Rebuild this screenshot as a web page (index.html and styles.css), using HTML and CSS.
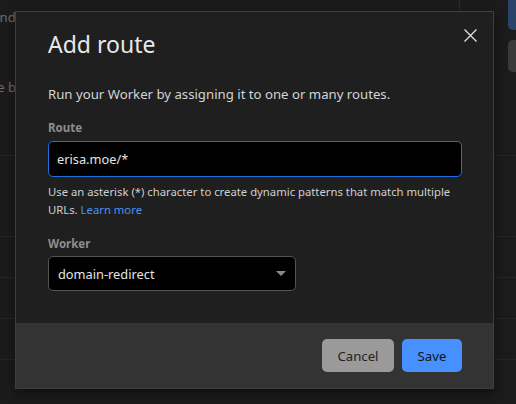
FILE: index.html
```html
<!DOCTYPE html>
<html lang="en">
<head>
<meta charset="utf-8">
<title>Add route</title>
<link rel="stylesheet" href="styles.css">
</head>
<body>
<div class="page">
  <div class="bg" aria-hidden="true">
    <div class="bg-top">
      <div class="bg-copy">
        <p class="bg-text bg-text-1">Add routes and custom domains to run this Worker on your zone</p>
        <p class="bg-text bg-text-2">Routes will be bound to this zone and its subdomains</p>
      </div>
      <div class="bg-divider"></div>
      <div class="bg-actions">
        <span class="bg-btn bg-btn-primary"></span>
        <span class="bg-btn bg-btn-secondary"></span>
      </div>
    </div>
    <div class="bg-table">
      <div class="bg-line bg-line-tall"></div>
      <div class="bg-line"></div>
      <div class="bg-line"></div>
      <div class="bg-line"></div>
      <div class="bg-line"></div>
    </div>
  </div>

  <div class="modal" role="dialog" aria-labelledby="modal-title">
    <div class="modal-body">
      <div class="modal-head">
        <h2 class="modal-title" id="modal-title">Add route</h2>
        <button class="close" aria-label="Close">
          <svg width="13" height="13" viewBox="0 0 13 13"><path d="M0.5 0.5 L12.5 12.5 M12.5 0.5 L0.5 12.5" stroke="#e2e2e2" stroke-width="1.3" fill="none"/></svg>
        </button>
      </div>
      <p class="modal-desc">Run your Worker by assigning it to one or many routes.</p>

      <div class="field">
        <label class="field-label">Route</label>
        <div class="input input-focus">erisa.moe/*</div>
        <p class="field-help">Use an asterisk (*) character to create dynamic patterns that match multiple URLs. <a class="link" href="#">Learn more</a></p>
      </div>

      <div class="field field-worker">
        <label class="field-label">Worker</label>
        <div class="select">
          <span>domain-redirect</span>
          <svg class="caret" width="10" height="5" viewBox="0 0 10 5"><path d="M0 0 H10 L5 5 Z" fill="#8a8a8a"/></svg>
        </div>
      </div>
    </div>
    <div class="modal-foot">
      <button class="btn btn-cancel">Cancel</button>
      <button class="btn btn-save">Save</button>
    </div>
  </div>
</div>
</body>
</html>
```

FILE: styles.css
```css
* { box-sizing: border-box; }
html, body { margin: 0; padding: 0; }
body {
  background: #1b1b1b;
  font-family: "Noto Sans", "Open Sans", sans-serif;
  width: 516px;
  height: 404px;
  overflow: hidden;
}
.page { position: relative; width: 516px; height: 404px; overflow: hidden; }

/* dimmed background page */
.bg { display: flex; flex-direction: column; }
.bg-top { display: flex; height: 155px; }
.bg-top > * { flex-shrink: 0; }
.bg-copy { width: 459px; display: flex; flex-direction: column; overflow: hidden; }
.bg-text { margin: 0; color: #6c6c6c; font-size: 13px; line-height: 20px; white-space: nowrap; }
.bg-text-1 { margin-top: 7px; margin-left: -78px; }
.bg-text-2 { margin-top: 50px; margin-left: -80px; }
.bg-divider { width: 1px; height: 40px; background: #2a2a2a; }
.bg-actions { display: flex; flex-direction: column; gap: 10px; margin-left: 48px; }
.bg-btn { display: block; width: 30px; border-radius: 5px; }
.bg-btn-primary { height: 30px; background: #2a4469; border-top-left-radius: 0; border-top-right-radius: 0; }
.bg-btn-secondary { height: 32px; background: #3a3a3a; }
.bg-table { display: flex; flex-direction: column; }
.bg-line { height: 41px; border-top: 1px solid #262626; }
.bg-line-tall { height: 81px; }

/* modal */
.modal {
  position: absolute;
  left: 15px;
  top: 11px;
  width: 479px;
  height: 378px;
  background: #1f1f1f;
  border: 1px solid #3e3e3e;
  box-shadow: 0 4px 10px rgba(0,0,0,0.45);
  display: flex;
  flex-direction: column;
}
.modal-body { flex: 1; padding: 17px 31px 0 32px; }
.modal-head { display: flex; justify-content: space-between; align-items: flex-start; }
.modal-title { margin: 0; font-size: 23px; font-weight: 400; color: #e8e8e8; line-height: 30px; }
.close {
  background: none; border: 0; padding: 0; margin: 0 -15px 0 0;
  width: 13px; height: 13px; display: block; cursor: pointer;
}
.close svg { display: block; }
.modal-desc { margin: 25px 0 0; font-size: 13.2px; color: #d4d4d4; line-height: 20px; }

.field { display: flex; flex-direction: column; margin-top: 16px; }
.field-worker { margin-top: 17px; }
.field-label { font-size: 11.5px; font-weight: 700; color: #8e8e8e; line-height: 16px; }
.input {
  margin-top: 5px;
  height: 36px;
  background: #000;
  border: 1px solid #555;
  border-radius: 5px;
  color: #e4e4e4;
  font-size: 12.8px;
  display: flex;
  align-items: center;
  padding: 0 8px;
}
.input-focus { border-color: #1f6fe0; }
.field-help { margin: 6px 0 0; font-size: 11.3px; line-height: 18px; color: #d0d0d0; }
.link { color: #4d93f0; text-decoration: none; }

.select {
  margin-top: 4px;
  width: 248px;
  height: 35px;
  background: #000;
  border: 1px solid #545454;
  border-radius: 5px;
  color: #e4e4e4;
  font-size: 12.8px;
  display: flex;
  align-items: center;
  justify-content: space-between;
  padding: 0 9px 0 9px;
}
.caret { display: block; }

.modal-foot {
  height: 65px;
  background: #333333;
  display: flex;
  justify-content: flex-end;
  align-items: center;
  gap: 8px;
  padding: 0 31px 0 32px;
}
.btn {
  height: 33px;
  border: 0;
  border-radius: 5px;
  font-family: inherit;
  font-size: 13.2px;
  color: #222;
  padding: 0;
  cursor: pointer;
}
.btn-cancel { background: #9a9a9a; width: 72px; }
.btn-save { background: #4790ff; width: 60px; color: #141414; }
```
